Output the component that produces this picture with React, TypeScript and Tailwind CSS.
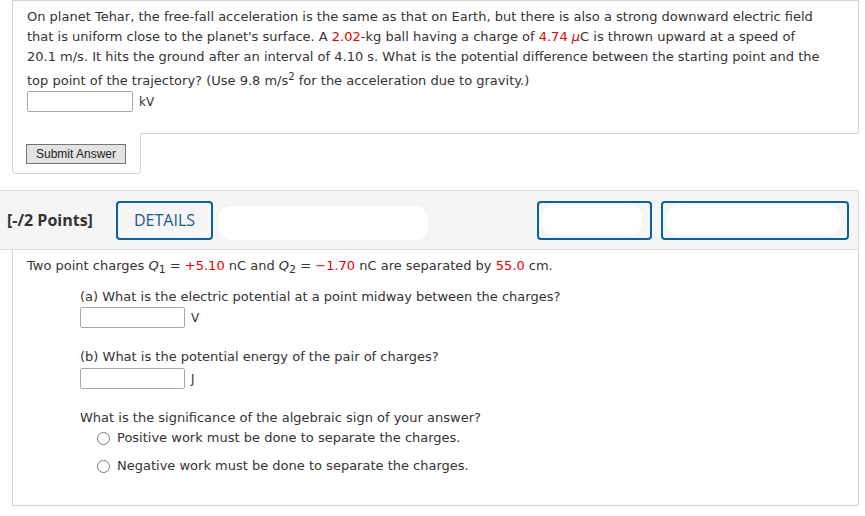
import React from "react";

const red = "text-[#e60000]";

function Input({ w = "w-[106px]" }: { w?: string }) {
  return <div className={`${w} h-[21px] border border-[#a8a8a8] rounded-[2px] bg-white`} />;
}

function Radio({ label }: { label: string }) {
  return (
    <div className="flex items-center h-[20px]">
      <div className="w-[13px] h-[13px] rounded-full border border-[#7a7a7a] bg-white ml-[17px] mr-[7px]" />
      <span>{label}</span>
    </div>
  );
}

export default function App() {
  return (
    <div
      className="w-[865px] h-[516px] bg-white overflow-hidden text-[#333] text-[13px]"
      style={{ fontFamily: "'DejaVu Sans', Verdana, sans-serif" }}
    >
      {/* Top question box */}
      <div className="ml-[12px] w-[847px]">
        <div className="h-[134px] border border-[#d2d2d2] rounded-br-[3px] pl-[14px] pt-[6px]">
          <div className="leading-[20px] whitespace-nowrap">
            <div>
              On planet Tehar, the free-fall acceleration is the same as that on Earth, but there is also a strong downward electric field
            </div>
            <div>
              that is uniform close to the planet's surface. A <span className={red}>2.02</span>-kg ball having a charge of{" "}
              <span className={red}>4.74</span> <span className="text-[#e60000] italic">μ</span>C is thrown upward at a speed of
            </div>
            <div>
              20.1 m/s. It hits the ground after an interval of 4.10 s. What is the potential difference between the starting point and the
            </div>
            <div className="mt-[4px]">
              top point of the trajectory? (Use 9.8 m/s<sup className="text-[10px]">2</sup> for the acceleration due to gravity.)
            </div>
          </div>
          <div className="flex items-center gap-[6px]">
            <Input />
            <span className="text-[12px]">kV</span>
          </div>
        </div>
        <div className="-mt-px w-[129px] h-[41px] border-l border-r border-b border-[#d2d2d2] rounded-b-[4px] bg-white flex items-start pl-[13px] pt-[11px]">
          <button
            className="w-[100px] h-[20px] bg-[#e3e3e3] border border-[#767676] text-[12px] text-[#222] leading-[18px] text-center"
            style={{ fontFamily: "'Liberation Sans', Arial, sans-serif" }}
          >
            Submit Answer
          </button>
        </div>
      </div>

      {/* Header bar */}
      <div
        className="mt-[16px] w-[859px] h-[60px] bg-[#f5f5f5] border-t border-b border-r border-[#dcdcdc] flex items-center"
        style={{ fontFamily: "'Open Sans', sans-serif" }}
      >
        <span className="ml-[7px] w-[88px] text-[16px] font-bold text-[#333] whitespace-nowrap">[-/2 Points]</span>
        <div className="ml-[21px] w-[97px] h-[39px] border-2 border-[#0b619a] rounded-[4px] flex items-center justify-center text-[16px] text-[#1a5a88]">
          DETAILS
        </div>
        <div className="ml-[5px] w-[210px] h-[34px] mt-[6px] bg-white rounded-[14px]" />
        <div className="ml-[109px] w-[115px] h-[39px] border-2 border-[#0b619a] rounded-[4px] p-[3px] flex items-center">
          <div className="w-[100px] h-[30px] bg-white rounded-[12px]" />
        </div>
        <div className="ml-[9px] w-[188px] h-[39px] border-2 border-[#0b619a] rounded-[4px] p-[3px] flex items-center">
          <div className="w-[175px] h-[30px] bg-white rounded-[14px]" />
        </div>
      </div>

      {/* Bottom question box */}
      <div className="ml-[12px] w-[847px] h-[256px] border-l border-r border-b border-[#d2d2d2] rounded-br-[3px] pl-[14px] pt-[6px] leading-[20px] whitespace-nowrap">
        <p>
          Two point charges <i>Q</i>
          <sub className="text-[11px]">1</sub> = <span className={red}>+5.10</span> nC and <i>Q</i>
          <sub className="text-[11px]">2</sub> = <span className={red}>−1.70</span> nC are separated by{" "}
          <span className={red}>55.0</span> cm.
        </p>
        <div className="ml-[53px]">
          <p className="mt-[11px]">(a) What is the electric potential at a point midway between the charges?</p>
          <div className="flex items-center gap-[6px]">
            <Input w="w-[105px]" />
            <span className="text-[12px]">V</span>
          </div>
          <p className="mt-[19px]">(b) What is the potential energy of the pair of charges?</p>
          <div className="flex items-center gap-[6px] mt-[1px]">
            <Input w="w-[105px]" />
            <span className="text-[12px]">J</span>
          </div>
          <p className="mt-[19px]">What is the significance of the algebraic sign of your answer?</p>
          <Radio label="Positive work must be done to separate the charges." />
          <div className="h-[8px]" />
          <Radio label="Negative work must be done to separate the charges." />
        </div>
      </div>
    </div>
  );
}
